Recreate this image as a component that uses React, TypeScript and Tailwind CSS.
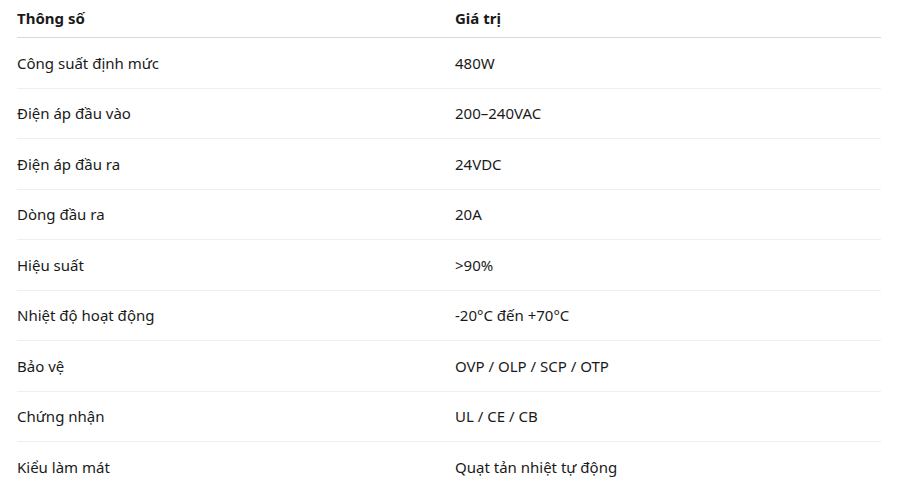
import React from "react";

const rows: [string, string][] = [
  ["Công suất định mức", "480W"],
  ["Điện áp đầu vào", "200–240VAC"],
  ["Điện áp đầu ra", "24VDC"],
  ["Dòng đầu ra", "20A"],
  ["Hiệu suất", ">90%"],
  ["Nhiệt độ hoạt động", "-20°C đến +70°C"],
  ["Bảo vệ", "OVP / OLP / SCP / OTP"],
  ["Chứng nhận", "UL / CE / CB"],
  ["Kiểu làm mát", "Quạt tản nhiệt tự động"],
];

export default function App() {
  return (
    <div
      className="w-[900px] h-[501px] bg-white text-[#1a1a1a] overflow-hidden"
      style={{ fontFamily: '"Noto Sans", "Open Sans", sans-serif' }}
    >
      <div className="ml-[17px] w-[864px]">
        <div className="grid grid-cols-[438px_1fr] h-[38px] items-center border-b border-[#d9d9d9] text-[15px] font-bold">
          <div>Thông số</div>
          <div>Giá trị</div>
        </div>
        {rows.map(([k, v], i) => (
          <div
            key={k}
            className={
              i < rows.length - 1
                ? "grid grid-cols-[438px_1fr] h-[50.5px] items-center border-b border-[#efefef] text-[15px]"
                : "grid grid-cols-[438px_1fr] h-[50.5px] items-center text-[15px]"
            }
          >
            <div>{k}</div>
            <div>{v}</div>
          </div>
        ))}
      </div>
    </div>
  );
}
